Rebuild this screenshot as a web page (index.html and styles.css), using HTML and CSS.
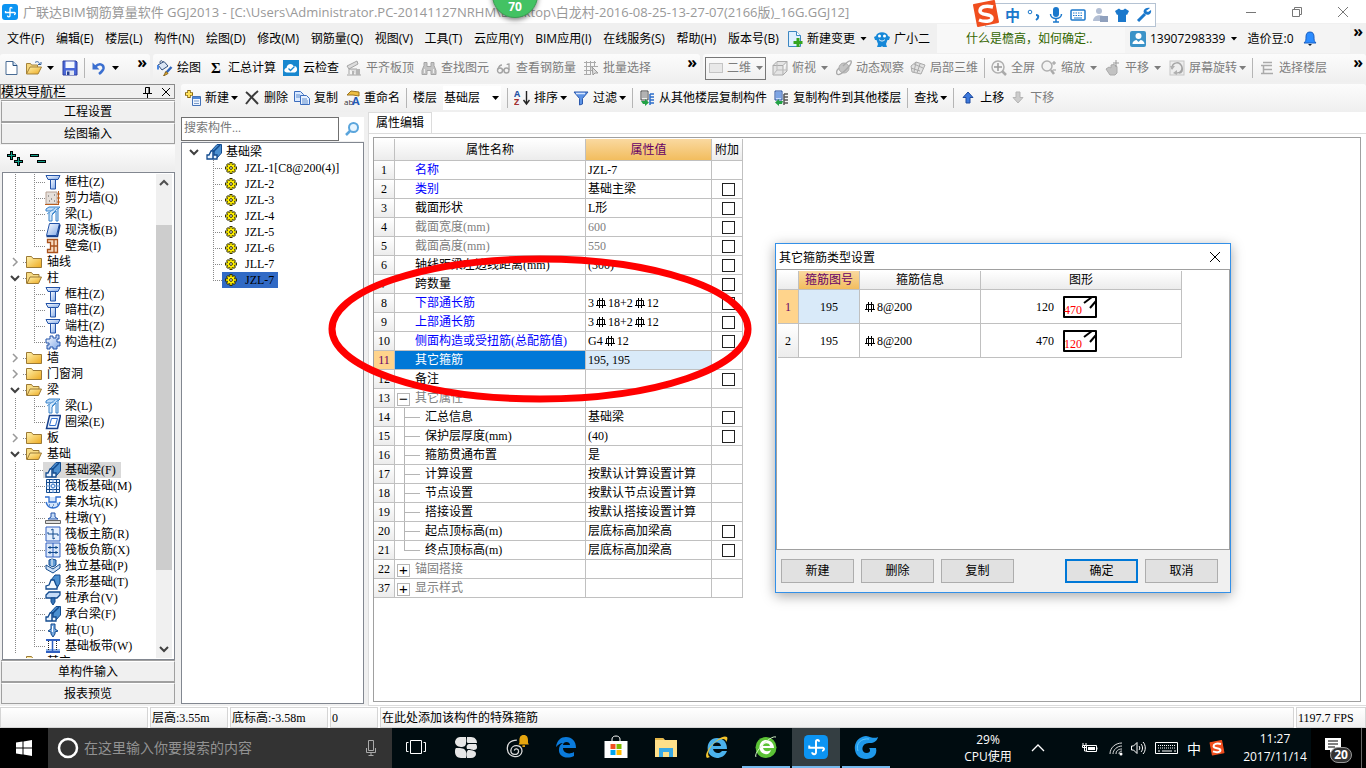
FILE: index.html
```html
<!DOCTYPE html>
<html lang="zh-CN">
<head>
<meta charset="utf-8">
<title>广联达BIM钢筋算量软件 GGJ2013</title>
<link rel="stylesheet" href="styles.css">
</head>
<body>
<svg class="defs" aria-hidden="true">
<defs>
<linearGradient id="gb" x1="0" y1="0" x2="1" y2="1"><stop offset="0" stop-color="#fff"/><stop offset="1" stop-color="#7fa8e8"/></linearGradient>
<linearGradient id="gy" x1="0" y1="0" x2="1" y2="1"><stop offset="0" stop-color="#fff3b0"/><stop offset="1" stop-color="#eda91f"/></linearGradient>
</defs>
<symbol id="app" viewBox="0 0 16 16"><rect width="16" height="16" rx="3" fill="#0c94f2"/><path d="M10 4.500C10 3 8 3 8 4.500v7c0 2-2.500 1.500-2.500 0M3.500 7v1.500h9c1.200 0 1.200 2-.5 2" fill="none" stroke="#fff" stroke-width="1.300"/></symbol>
<symbol id="new" viewBox="0 0 16 16"><path d="M2 1.500h7l4 4v9H2z" fill="#fff" stroke="#4a6c95"/><path d="M9 1.500v4h4" fill="#cfe0f5" stroke="#27507f"/></symbol>
<symbol id="open" viewBox="0 0 16 16"><path d="M.5 14V3.500h4l1 1.500h6v2" fill="#f5d67c" stroke="#a5833a"/><path d="M.5 14 4 7h11.500L12 14z" fill="url(#gy)" stroke="#a5833a"/><path d="M9 2.500c2-1.500 4-1 4.500 1.500m1.500-2v2.500h-3" fill="none" stroke="#2f5f9e"/></symbol>
<symbol id="save" viewBox="0 0 16 16"><path d="M1 1h13l1 1v13H1z" fill="#4a68d8" stroke="#2e3f9f"/><path d="M3.500 1.500h9V8h-9z" fill="#f4f7ff"/><path d="M4 10.500h8V15H4z" fill="#dfe5f2"/><path d="M5 11.500h2.500V15H5z" fill="#26408f"/></symbol>
<symbol id="undo" viewBox="0 0 16 16"><path d="M4 7c5-5 9-2 8.500 1.500C12 11 10 12.500 8 14" fill="none" stroke="#3b6fd0" stroke-width="2.500"/><path d="M1.500 2.500v7h7z" fill="#3b6fd0"/></symbol>
<symbol id="paint" viewBox="0 0 16 16"><path d="m1 5 6-3.500 4 4.500-6 4z" fill="#dbe6f5" stroke="#304e7c"/><path d="M3 3C3 0 5 0 6 2.500" fill="none" stroke="#304e7c"/><path d="M1 5v4.500" stroke="#4a86df" stroke-width="2"/><path d="m14.500 7-6 6.500" stroke="#2f66bd" stroke-width="2.500"/><path d="m9 11.500 2 2L6.500 16z" fill="#e5ad2d" stroke="#8b6921"/></symbol>
<symbol id="cloud" viewBox="0 0 16 16"><rect width="16" height="16" fill="#1787cf"/><path d="M4 12.500c-3.500 0-3.500-4-.5-4.500C4 3.500 9 2.500 10.500 6c4-.5 5 5 1.500 6.500z" fill="#fff"/><path d="m5.500 8.500 2 2 4-4" fill="none" stroke="#1787cf" stroke-width="1.300"/></symbol>
<symbol id="align" viewBox="0 0 16 16"><path d="m1 6 10-5 1 3L3 9zM3 9v5m0-5h8v6M1 15h14" fill="#ddd" stroke="#a5a5a5"/><path d="M6 11h2v4H6zm4-2h4v6h-4z" fill="#b5b5b5"/></symbol>
<symbol id="bino" viewBox="0 0 16 16"><path d="M3 2.500h3v4h4v-4h3v3l2 5v4h-5v-4H6v4H1v-4l2-5z" fill="#c4c4c4" stroke="#a5a5a5"/><path d="M3.500 9v4m9-4v4" stroke="#eee"/></symbol>
<symbol id="glasses" viewBox="0 0 16 16"><circle cx="4" cy="10.500" r="2.500" fill="none" stroke="#a4a4a4" stroke-width="1.400"/><circle cx="10.500" cy="10.500" r="2.500" fill="none" stroke="#a4a4a4" stroke-width="1.400"/><path d="M6.500 10h2M2 9c1-3 2-4 4-4m7 5V4c-1 0-2 0-2 1" fill="none" stroke="#a4a4a4" stroke-width="1.300"/></symbol>
<symbol id="batch" viewBox="0 0 16 16"><path d="M1 2.500h12M1 6.500h14M1 10.500h8M1 14.500h6M3.500 1v14M7.500 1v14M11.500 1v6" stroke="#aaa" fill="none"/><path d="m9 7 6 6-3 0-2 2z" fill="#ddd" stroke="#999"/></symbol>
<symbol id="cube" viewBox="0 0 16 16"><path d="M1 5.500h10V15H1zM1 5.500l4-4h10l-4 4M15 1.500v9.500l-4 4" fill="#e4e4e4" stroke="#aaa"/><path d="M5 2v8h10M5 10l-4 5" stroke="#bbb" fill="none"/></symbol>
<symbol id="orbit" viewBox="0 0 16 16"><circle cx="8" cy="8" r="5" fill="#c4c4c4" stroke="#adadad"/><path d="M1 14c3 3 16-10 14-13C13 0 9 4 7 6M1 14c-1-2 0-4 2-6" fill="none" stroke="#aaa" stroke-width="1.400"/></symbol>
<symbol id="local" viewBox="0 0 16 16"><path d="m1 6 5-4 9 3-4 9-9-2zM4 4l9 4M1 8l9 3M6 2 4 12M10 4 7 13" fill="#e2e2e2" stroke="#aaa"/></symbol>
<symbol id="full" viewBox="0 0 16 16"><circle cx="7" cy="7" r="6" fill="#f5f5f5" stroke="#b0b0b0" stroke-width="1.500"/><path d="M7 3v8M3 7h8" stroke="#999" stroke-width="1.500"/><path d="m11 11 4 4" stroke="#aaa" stroke-width="2.500"/></symbol>
<symbol id="zoom" viewBox="0 0 16 16"><circle cx="6" cy="6" r="5" fill="#f3f3f3" stroke="#b0b0b0" stroke-width="1.500"/><path d="m10 10 3 4" stroke="#aaa" stroke-width="2.500"/><path d="M11 3h4m-2-2v4m-1 5h3" stroke="#999"/></symbol>
<symbol id="pan" viewBox="0 0 16 16"><path d="m1 9 3-2 2 1V5l3-.5 3 2V13l-2 2H5z" fill="#c2c2c2" stroke="#aaa"/><path d="M11 0v7M8 3h6" stroke="#999"/></symbol>
<symbol id="rotate" viewBox="0 0 16 16"><rect x="1" y="1" width="14" height="14" fill="#ededed" stroke="#c5c5c5"/><path d="M3 9c-1-8 10-8 10-1 0 5-4 5-7 5M10 13c3 0 4-3 3-6" stroke="#a5a5a5" stroke-width="1.500" fill="none"/><path d="M1 6h5l-3 4zM8 10v5l-4-2z" fill="#b0b0b0"/></symbol>
<symbol id="floors" viewBox="0 0 16 16"><path d="M4 2.500h9M2 5.500h11M4 9.500h9M2 13.500h12M4.500 5v8" stroke="#aaa" stroke-width="1.500" fill="none"/></symbol>
<symbol id="add" viewBox="0 0 16 16"><path d="M4 0v8M0 4h8" stroke="#8c6b10" stroke-width="3.500"/><path d="M4 1v6M1 4h6" stroke="#ffe15b" stroke-width="2"/><path d="M7.500 6.500h8v9h-8z" fill="#eef5ff" stroke="#4472b8"/><path d="M8 8h7" stroke="#4d86d8" stroke-width="2"/><path d="M9 11h5m-5 2.500h5" stroke="#7d9dca"/></symbol>
<symbol id="x" viewBox="0 0 16 16"><path d="M2 2c4 3 8 8 12 12M14 1C9 5 5 10 2 14" stroke="#3b3b3b" stroke-width="2" fill="none"/></symbol>
<symbol id="copy" viewBox="0 0 16 16"><path d="M.5 1.500h6l3 3v7h-9z" fill="#dae9ff" stroke="#3c6dbd"/><path d="M6.500 5.500h6l3 3v6h-9z" fill="#e9f2ff" stroke="#3c6dbd"/><path d="M2 5h4M2 7h4M8 9h5m-5 2h6m-6 2h6" stroke="#5f8ccc"/></symbol>
<symbol id="funnel" viewBox="0 0 16 16"><path d="M1 2h14L9.500 8.500V14l-3 1V8.500z" fill="#5c93e6" stroke="#2c59ac"/><path d="M3 3.500h9" stroke="#d7e6ff" stroke-width="1.500"/></symbol>
<symbol id="cpf" viewBox="0 0 16 16"><path d="M2 1h7v9H2z" fill="#eee" stroke="#444"/><path d="M3 3h5M3 5h5M3 7h5" stroke="#777"/><path d="M11 4h4M11 7h4M11 10h4M11 13h4M11 4v11" stroke="#2d6dca" stroke-width="1.500"/><path d="M2 11h4V9l4 3.500L6 16v-2H4z" fill="#23a145"/></symbol>
<symbol id="cpt" viewBox="0 0 16 16"><path d="M2 1h7v9H2z" fill="#cbdcff" stroke="#254f9c"/><path d="M3 3h5M3 5h5M3 7h5" stroke="#2d6dca"/><path d="M11 4h4M11 7h4M11 10h4M11 13h4M11 4v11" stroke="#555" stroke-width="1.500"/><path d="M10 11H6V9l-4 3.500L6 16v-2h3z" fill="#23a145"/></symbol>
<symbol id="up" viewBox="0 0 16 16"><path d="m8 2 5 5.500h-3V13H6V7.500H3z" fill="#3d79dd" stroke="#1e4a9d"/></symbol>
<symbol id="down" viewBox="0 0 16 16"><path d="M8 13 3 7.500h3V2h4v5.500h3z" fill="#ccc" stroke="#b5b5b5"/></symbol>
<symbol id="chg" viewBox="0 0 16 16"><path d="M1.500.5h8l4 4v11h-12z" fill="#dff0ff" stroke="#3c87c2"/><path d="M9.500.5v4h4" fill="#fff" stroke="#3c87c2"/><path d="M11 7v9m-4.500-4.500h9" stroke="#35a51e" stroke-width="3"/></symbol>
<symbol id="bot" viewBox="0 0 16 16"><path d="M2 5C3 0 13 0 14 5l2 1-1 3-1.500 0L12 13l1 3H9l-1-1-1 1H3l1-3-1.500-4L1 9 0 6z" fill="#1688d8"/><circle cx="5.500" cy="5" r="1.500" fill="#fff"/><circle cx="10.500" cy="5" r="1.500" fill="#fff"/><path d="M5 8.500c2 2 4 2 6 0" stroke="#fff" fill="none"/></symbol>
<symbol id="usr" viewBox="0 0 16 16"><rect width="16" height="16" rx="2" fill="#3b93c8"/><circle cx="8.500" cy="5" r="3" fill="#fff"/><path d="M2.500 13c0-3 3-4 4-4l2 2 2-2c2 0 4 2 4 4z" fill="#fff"/></symbol>
<symbol id="bell" viewBox="0 0 16 16"><path d="M8 1c3 0 4 2 4 5s0 4 2 6H2c2-2 2-3 2-6s1-5 4-5z" fill="#2b8cff" stroke="#1b5fc0"/><path d="m6 13 2 2 2-2z" fill="#123"/></symbol>
<symbol id="col" viewBox="0 0 16 16"><path d="M1 1.500h14l-2 4H3z" fill="url(#gb)" stroke="#2353a8"/><path d="M5.500 5.500h5v9.500h-5z" fill="url(#gb)" stroke="#2353a8"/></symbol>
<symbol id="wall" viewBox="0 0 16 16"><path d="M1 2h11v12H1z" fill="#e5dfda" stroke="#b7a294"/><path d="M13.500 1v14M0 14.500h14M12 4h3m-3 4h3m-3 4h3" stroke="#b95d1d" fill="none"/><path d="M3 6h1m2 3h1m2-4h1M4 11h1m4 0h1" stroke="#555"/></symbol>
<symbol id="beam" viewBox="0 0 16 16"><path d="M1 3 4 1h11l-4 4-10 0z" fill="#b9d9f8" stroke="#3a83c9"/><path d="M4 6v9h3V9l4-4v10h2V3" fill="#d3e8fc" stroke="#3a83c9"/><path d="m2 8 8-6m-3 6 6-6" stroke="#5a9cd8"/></symbol>
<symbol id="slab" viewBox="0 0 16 16"><path d="M4.500 1.500h10l-3 12H1.500z" fill="url(#gb)" stroke="#2353a8"/><path d="M1.500 14.500h11l2.500-12" fill="none" stroke="#17408c" stroke-width="1.500"/></symbol>
<symbol id="niche" viewBox="0 0 16 16"><path d="M2.500 1.500h10v13h-10v-3h3v-7h-3zM9 2v12M6 8h6" fill="#f9dcc1" stroke="#a9521c" stroke-width="1.300"/></symbol>
<symbol id="folder" viewBox="0 0 16 16"><path d="M.5 13.500v-11h5l1.500 2h8.500v9z" fill="url(#gy)" stroke="#9c7a35"/></symbol>
<symbol id="fopen" viewBox="0 0 16 16"><path d="M.5 13.500v-11h5l1.500 2h6v3" fill="#f8dc85" stroke="#9c7a35"/><path d="m1 13.500 3-6.500h11.500l-3 6.500z" fill="url(#gy)" stroke="#9c7a35"/></symbol>
<symbol id="gcol" viewBox="0 0 16 16"><path d="M5 2h3v2h3V1h3v4h-2v3h3v4h-3v3H8v-2H5v2H2v-4h2V9H1V5h4z" fill="url(#gb)" stroke="#2353a8"/></symbol>
<symbol id="ring" viewBox="0 0 16 16"><path d="M4.500 1.500h11l-3 13h-11z" fill="#eef5ff" stroke="#17408c" stroke-width="1.500"/><path d="M6.500 4.500h6l-2 7h-6z" fill="#fff" stroke="#2f6fd0"/></symbol>
<symbol id="fbeam" viewBox="0 0 16 16"><path d="m5 7 6-6.500h4.500V9L11 14" fill="#4b8fd0" stroke="#134b8e"/><path d="M1 15v-4h2l2-4h3v4h3v4z" fill="#eaf4ff" stroke="#134b8e" stroke-width="1.300"/><path d="M7 15V8l7-7" stroke="#134b8e" stroke-width="1.500" fill="none"/></symbol>
<symbol id="raft" viewBox="0 0 16 16"><path d="M1.500 1.500h13v13h-13z" fill="#eaf2fe" stroke="#134b8e"/><path d="M4.500 1v14M11.500 1v14M1 4.500h14M1 11.500h14" fill="none" stroke="#134b8e"/><path d="M6.500 6.500h3v3h-3zM8 1v5m0 4v5M1 8h5m4 0h5" fill="none" stroke="#5b8fd0"/></symbol>
<symbol id="pit" viewBox="0 0 16 16"><path d="M0 3h4v5h7V3h5M1 8c2 8 12 8 14 0" fill="#d4e5fb" stroke="#2f6fd0" stroke-width="1.300"/><path d="M4 11h1m3 0h1m3-1h1m-6 3h1" stroke="#134b8e"/></symbol>
<symbol id="pier" viewBox="0 0 16 16"><path d="m3 9 3-2V3h4v4l3 2z" fill="#c5dcf8" stroke="#2353a8"/><path d="M.5 10.500h15v3H.5z" fill="#ddd" stroke="#666"/></symbol>
<symbol id="rmain" viewBox="0 0 16 16"><path d="M1 1h14v14H1z" fill="#e6f0fe" stroke="#2f5fc0"/><path d="M8 3v10M3 8h10M6 4l2-1M3 8V6m10 2v2m-5 3 2-1" stroke="#134b8e" fill="none"/></symbol>
<symbol id="rneg" viewBox="0 0 16 16"><path d="M1 1h14v14H1zM8 1v14" fill="#dbe7f8" stroke="#2f5fc0"/><path d="M3 5.500h10M3 10.500h10M5 4v3m6-3v3M5 9v3m6-3v3" stroke="#134b8e" fill="none"/></symbol>
<symbol id="iso" viewBox="0 0 16 16"><path d="m1 7 7 4 7-5v4l-7 5-7-4z" fill="#cfe2f8" stroke="#134b8e"/><path d="M4 7V2l3-1 4 1v5L8 9z" fill="#629bd4" stroke="#134b8e"/><path d="M7 1v7" stroke="#fff"/></symbol>
<symbol id="strip" viewBox="0 0 16 16"><path d="m6 6 4-5h5v8l-3 5" fill="#4b8fd0" stroke="#134b8e"/><path d="M1 15v-3l3-1 2-5h3l2 5 1 1v3z" fill="#f3f9ff" stroke="#134b8e" stroke-width="1.300"/></symbol>
<symbol id="cap" viewBox="0 0 16 16"><path d="m1 5 3-3h11v3l-3 3H1z" fill="#c5dcf8" stroke="#134b8e" stroke-width="1.300"/><path d="M6 8h4v4l-2 3-2-3z" fill="#3573b5" stroke="#134b8e"/></symbol>
<symbol id="pile" viewBox="0 0 16 16"><path d="M6 2h4v5l3 2-3 1v2l-2 3-2-3v-2L3 9l3-2z" fill="#75a7dd" stroke="#134b8e"/><path d="M7.500 4v6" stroke="#fff"/></symbol>
<symbol id="band" viewBox="0 0 16 16"><path d="M1 2h14M1 14h14" stroke="#2f5fc0" stroke-width="2"/><path d="M1 11h14v2H1z" fill="#8db3ec"/><path d="M7.500 3v10" stroke="#2f5fc0" stroke-width="1.500"/><path d="M3.500 3v10m8-10v10" stroke="#222" stroke-dasharray="1 1"/></symbol>
<symbol id="gear" viewBox="0 0 16 16"><path d="M8 2v12M2 8h12M4 4l8 8M12 4l-8 8" stroke="#333000" stroke-width="3"/><path d="M8 3v10M3 8h10M4.500 4.500l7 7M11.500 4.500l-7 7" stroke="#ffee00" stroke-width="1.400"/><circle cx="8" cy="8" r="3.400" fill="#ffee00"/><circle cx="8" cy="8" r="1.400" fill="#fff" stroke="#333000"/></symbol>
<symbol id="rebar" viewBox="0 0 12 12"><path d="M4.500 1v10M7.500 1v10M1 8.500h10M2.500 8.500v-5h7v5" fill="none" stroke="currentColor"/></symbol>
<symbol id="sogou" viewBox="0 0 28 28"><path d="m2 5 20-4 4 21-20 4z" fill="#f04e1e" stroke="#f04e1e" stroke-width="2" stroke-linejoin="round"/><path d="M21 7C13 5 8 7 8 11c0 5 12 2 12 7 0 4-8 4-13 2" fill="none" stroke="#fff" stroke-width="3.500"/></symbol>
<symbol id="chevD" viewBox="0 0 12 12"><path d="m2 4 4 4 4-4" fill="none" stroke="#404040" stroke-width="2"/></symbol>
<symbol id="chevR" viewBox="0 0 12 12"><path d="m4 2 4 4-4 4" fill="none" stroke="#999" stroke-width="1.500"/></symbol>
<symbol id="chevU" viewBox="0 0 12 12"><path d="m2 8 4-4 4 4" fill="none" stroke="#505050" stroke-width="2"/></symbol>
<symbol id="hoop" viewBox="0 0 36 24"><path d="M2 2h32v20H2z" fill="none" stroke="#000" stroke-width="2" stroke-linejoin="round"/><path d="m22 8 8-6M28 13l6-7" stroke="#000" stroke-width="2"/></symbol>
</svg>

<header class="title">
<svg class="i"><use href="#app"/></svg>
<span class="title-text">广联达BIM钢筋算量软件 GGJ2013 - [C:\Users\Administrator.PC-20141127NRHM\Desktop\白龙村-2016-08-25-13-27-07(2166版)_16G.GGJ12]</span>
<div class="winbtns">
<button aria-label="最小化"><svg class="i" viewBox="0 0 16 16"><path d="M3 8.500h10" stroke="#777"/></svg></button>
<button aria-label="还原"><svg class="i" viewBox="0 0 16 16"><path d="M3.500 5.500h7v7h-7zM5.500 5.500v-2h7v7h-2" fill="none" stroke="#777"/></svg></button>
<button aria-label="关闭"><svg class="i" viewBox="0 0 16 16"><path d="m3 3 10 10M13 3 3 13" stroke="#777"/></svg></button>
</div>
</header>

<nav class="menu">
<div class="menus">
<button>文件(F)</button><button>编辑(E)</button><button>楼层(L)</button><button>构件(N)</button><button>绘图(D)</button><button>修改(M)</button><button>钢筋量(Q)</button><button>视图(V)</button><button>工具(T)</button><button>云应用(Y)</button><button>BIM应用(I)</button><button>在线服务(S)</button><button>帮助(H)</button><button>版本号(B)</button>
</div>
<div class="menu-extra"><button class="t"><svg class="i"><use href="#chg"/></svg>新建变更<i class="caret"></i></button><button class="t"><svg class="i"><use href="#bot"/></svg>广小二</button></div>
<a class="tip" href="#">什么是檐高，如何确定..</a>
<div class="account"><button class="t"><svg class="i"><use href="#usr"/></svg>13907298339<i class="caret"></i></button><span>造价豆:0</span><svg class="i"><use href="#bell"/></svg></div>
<span class="more">»</span>
</nav>

<div class="bars">
<div class="bar b1">
<button class="t" aria-label="新建"><svg class="i"><use href="#new"/></svg></button>
<button class="t" aria-label="打开"><svg class="i"><use href="#open"/></svg><i class="caret"></i></button>
<button class="t" aria-label="保存"><svg class="i"><use href="#save"/></svg></button><i class="sep"></i>
<button class="t" aria-label="撤销"><svg class="i"><use href="#undo"/></svg><i class="caret"></i></button>
<span class="more">»</span>
</div>
<div class="bar b2">
<button class="t"><svg class="i"><use href="#paint"/></svg>绘图</button>
<button class="t"><b class="sigma">Σ</b>汇总计算</button>
<button class="t"><svg class="i"><use href="#cloud"/></svg>云检查</button>
<button class="t off"><svg class="i"><use href="#align"/></svg>平齐板顶</button>
<button class="t off"><svg class="i"><use href="#bino"/></svg>查找图元</button>
<button class="t off"><svg class="i"><use href="#glasses"/></svg>查看钢筋量</button>
<button class="t off"><svg class="i"><use href="#batch"/></svg>批量选择</button>
<span class="more">»</span>
</div>
<div class="bar b3">
<button class="t off view"><i class="swatch"></i>二维<i class="caret"></i></button>
<button class="t off"><svg class="i"><use href="#cube"/></svg>俯视<i class="caret"></i></button>
<button class="t off"><svg class="i"><use href="#orbit"/></svg>动态观察</button>
<button class="t off"><svg class="i"><use href="#local"/></svg>局部三维</button><i class="sep"></i>
<button class="t off"><svg class="i"><use href="#full"/></svg>全屏</button>
<button class="t off"><svg class="i"><use href="#zoom"/></svg>缩放<i class="caret"></i></button>
<button class="t off"><svg class="i"><use href="#pan"/></svg>平移<i class="caret"></i></button>
<button class="t off tight"><svg class="i"><use href="#rotate"/></svg>屏幕旋转<i class="caret"></i></button><i class="sep"></i>
<button class="t off"><svg class="i"><use href="#floors"/></svg>选择楼层</button>
<span class="more">»</span>
</div>
</div>

<div class="work">
<aside class="nav">
<div class="nav-head"><span>模块导航栏</span><svg class="i" viewBox="0 0 16 16"><path d="M5.500 3.500h4v6h-4zM9 3v7M3 9.500h9M7.500 10v4" stroke="#000" fill="none"/></svg><svg class="i" viewBox="0 0 16 16"><path d="m4 4 8 8M12 4l-8 8" stroke="#000"/></svg></div>
<button class="nav-btn">工程设置</button>
<button class="nav-btn">绘图输入</button>
<div class="nav-tools"><svg class="i" viewBox="0 0 16 16"><path d="M4.500 0v9M0 4.500h9M11.500 6v9M7 10.500h9" stroke="#000" stroke-width="3"/><path d="M4.500 1v7M1 4.500h7M11.500 7v7M8 10.500h7" stroke="#12a08a"/></svg><svg class="i" viewBox="0 0 16 16"><path d="M0 4.500h9M7 10.500h9" stroke="#000" stroke-width="3"/><path d="M1 4.500h7M8 10.500h7" stroke="#12a08a"/></svg></div>
<div class="tree-box">
<ul class="tree">
<li><svg class="i"><use href="#col"/></svg>框柱(Z)</li>
<li><svg class="i"><use href="#wall"/></svg>剪力墙(Q)</li>
<li><svg class="i"><use href="#beam"/></svg>梁(L)</li>
<li><svg class="i"><use href="#slab"/></svg>现浇板(B)</li>
<li class="last"><svg class="i"><use href="#niche"/></svg>壁龛(I)</li>
<li class="dir"><svg class="c"><use href="#chevR"/></svg><svg class="i"><use href="#folder"/></svg>轴线</li>
<li class="dir"><svg class="c"><use href="#chevD"/></svg><svg class="i"><use href="#fopen"/></svg>柱</li>
<li><svg class="i"><use href="#col"/></svg>框柱(Z)</li>
<li><svg class="i"><use href="#col"/></svg>暗柱(Z)</li>
<li><svg class="i"><use href="#col"/></svg>端柱(Z)</li>
<li class="last"><svg class="i"><use href="#gcol"/></svg>构造柱(Z)</li>
<li class="dir"><svg class="c"><use href="#chevR"/></svg><svg class="i"><use href="#folder"/></svg>墙</li>
<li class="dir"><svg class="c"><use href="#chevR"/></svg><svg class="i"><use href="#folder"/></svg>门窗洞</li>
<li class="dir"><svg class="c"><use href="#chevD"/></svg><svg class="i"><use href="#fopen"/></svg>梁</li>
<li><svg class="i"><use href="#beam"/></svg>梁(L)</li>
<li class="last"><svg class="i"><use href="#ring"/></svg>圈梁(E)</li>
<li class="dir"><svg class="c"><use href="#chevR"/></svg><svg class="i"><use href="#folder"/></svg>板</li>
<li class="dir"><svg class="c"><use href="#chevD"/></svg><svg class="i"><use href="#fopen"/></svg>基础</li>
<li><span class="cur"><svg class="i"><use href="#fbeam"/></svg>基础梁(F)</span></li>
<li><svg class="i"><use href="#raft"/></svg>筏板基础(M)</li>
<li><svg class="i"><use href="#pit"/></svg>集水坑(K)</li>
<li><svg class="i"><use href="#pier"/></svg>柱墩(Y)</li>
<li><svg class="i"><use href="#rmain"/></svg>筏板主筋(R)</li>
<li><svg class="i"><use href="#rneg"/></svg>筏板负筋(X)</li>
<li><svg class="i"><use href="#iso"/></svg>独立基础(P)</li>
<li><svg class="i"><use href="#strip"/></svg>条形基础(T)</li>
<li><svg class="i"><use href="#cap"/></svg>桩承台(V)</li>
<li><svg class="i"><use href="#fbeam"/></svg>承台梁(F)</li>
<li><svg class="i"><use href="#pile"/></svg>桩(U)</li>
<li class="last"><svg class="i"><use href="#band"/></svg>基础板带(W)</li>
<li class="dir"><svg class="c"></svg><svg class="i"><use href="#folder"/></svg>其它</li>
</ul>
<div class="scroll"><svg class="c"><use href="#chevU"/></svg><div class="track"><i></i></div><svg class="c"><use href="#chevD"/></svg></div>
</div>
<button class="nav-btn">单构件输入</button>
<button class="nav-btn">报表预览</button>
</aside>

<main class="main">
<div class="bar b4">
<button class="t tight"><svg class="i"><use href="#add"/></svg>新建<i class="caret"></i></button>
<button class="t"><svg class="i"><use href="#x"/></svg>删除</button>
<button class="t"><svg class="i"><use href="#copy"/></svg>复制</button>
<button class="t"><svg class="i" viewBox="0 0 16 16"><path d="m3 5 4-4 8 1v4L9 5z" fill="#edbd42" stroke="#9b7421"/><text x="0" y="15" font-size="8" fill="#333">ab</text><text x="8" y="15" font-size="11" font-weight="bold" fill="#2459b3">A</text></svg>重命名</button><i class="sep"></i>
<label for="floor">楼层</label><span class="floor"><select id="floor"><option>基础层</option></select><i class="caret"></i></span><i class="sep"></i>
<button class="t tight"><svg class="i" viewBox="0 0 16 16"><text x="0" y="7" font-size="9" font-weight="bold" fill="#2353a5">A</text><text x="0" y="15" font-size="9" font-weight="bold" fill="#a33131">Z</text><path d="M12.500 1v12m-3-3 3 4 3-4" fill="none" stroke="#222" stroke-width="1.400"/></svg>排序<i class="caret"></i></button>
<button class="t tight"><svg class="i"><use href="#funnel"/></svg>过滤<i class="caret"></i></button><i class="sep"></i>
<button class="t"><svg class="i"><use href="#cpf"/></svg>从其他楼层复制构件</button>
<button class="t"><svg class="i"><use href="#cpt"/></svg>复制构件到其他楼层</button><i class="sep"></i>
<button class="t tight">查找<i class="caret"></i></button><i class="sep"></i>
<button class="t"><svg class="i"><use href="#up"/></svg>上移</button>
<button class="t off"><svg class="i"><use href="#down"/></svg>下移</button>
</div>
<div class="split">
<section class="list">
<div class="search"><input type="text" placeholder="搜索构件..." aria-label="搜索构件"><button aria-label="搜索"><svg class="i" viewBox="0 0 16 16"><circle cx="9.500" cy="6.500" r="4.500" fill="#e6f4ff" stroke="#5aa5dc" stroke-width="2"/><path d="m6 10-4 4" stroke="#5aa5dc" stroke-width="2.500"/></svg></button></div>
<ul class="parts">
<li class="root"><svg class="c"><use href="#chevD"/></svg><svg class="i"><use href="#fbeam"/></svg>基础梁</li>
<li><span><svg class="i"><use href="#gear"/></svg>JZL-1[C8@200(4)]</span></li>
<li><span><svg class="i"><use href="#gear"/></svg>JZL-2</span></li>
<li><span><svg class="i"><use href="#gear"/></svg>JZL-3</span></li>
<li><span><svg class="i"><use href="#gear"/></svg>JZL-4</span></li>
<li><span><svg class="i"><use href="#gear"/></svg>JZL-5</span></li>
<li><span><svg class="i"><use href="#gear"/></svg>JZL-6</span></li>
<li><span><svg class="i"><use href="#gear"/></svg>JLL-7</span></li>
<li class="last"><span class="sel"><svg class="i"><use href="#gear"/></svg>JZL-7</span></li>
</ul>
</section>
<section class="props">
<div class="tabs"><button class="tab">属性编辑</button></div>
<div class="pane"><div class="sheet">
<table class="grid">
<colgroup><col class="c-no"><col class="c-name"><col class="c-val"><col class="c-add"></colgroup>
<thead><tr><th></th><th>属性名称</th><th class="hot">属性值</th><th>附加</th></tr></thead>
<tbody>
<tr><th>1</th><td class="n blue">名称</td><td>JZL-7</td><td></td></tr>
<tr><th>2</th><td class="n blue">类别</td><td>基础主梁</td><td><input type="checkbox" aria-label="附加 类别"></td></tr>
<tr><th>3</th><td class="n">截面形状</td><td>L形</td><td><input type="checkbox" aria-label="附加 截面形状"></td></tr>
<tr class="dim"><th>4</th><td class="n">截面宽度(mm)</td><td>600</td><td><input type="checkbox" aria-label="附加 截面宽度"></td></tr>
<tr class="dim"><th>5</th><td class="n">截面高度(mm)</td><td>550</td><td><input type="checkbox" aria-label="附加 截面高度"></td></tr>
<tr><th>6</th><td class="n">轴线距梁左边线距离(mm)</td><td>(300)</td><td><input type="checkbox" aria-label="附加 轴线距离"></td></tr>
<tr><th>7</th><td class="n">跨数量</td><td></td><td><input type="checkbox" aria-label="附加 跨数量"></td></tr>
<tr><th>8</th><td class="n blue">下部通长筋</td><td>3<svg class="r"><use href="#rebar"/></svg>18+2<svg class="r"><use href="#rebar"/></svg>12</td><td><input type="checkbox" aria-label="附加 下部通长筋"></td></tr>
<tr><th>9</th><td class="n blue">上部通长筋</td><td>3<svg class="r"><use href="#rebar"/></svg>18+2<svg class="r"><use href="#rebar"/></svg>12</td><td><input type="checkbox" aria-label="附加 上部通长筋"></td></tr>
<tr><th>10</th><td class="n blue">侧面构造或受扭筋(总配筋值)</td><td>G4<svg class="r"><use href="#rebar"/></svg>12</td><td><input type="checkbox" aria-label="附加 侧面构造"></td></tr>
<tr class="active"><th>11</th><td class="n">其它箍筋</td><td>195, 195</td><td></td></tr>
<tr><th>12</th><td class="n">备注</td><td></td><td><input type="checkbox" aria-label="附加 备注"></td></tr>
<tr class="dim"><th>13</th><td class="g"><button class="pm" aria-label="折叠">−</button>其它属性</td><td></td><td></td></tr>
<tr><th>14</th><td class="s">汇总信息</td><td>基础梁</td><td><input type="checkbox" aria-label="附加 汇总信息"></td></tr>
<tr><th>15</th><td class="s">保护层厚度(mm)</td><td>(40)</td><td><input type="checkbox" aria-label="附加 保护层厚度"></td></tr>
<tr><th>16</th><td class="s">箍筋贯通布置</td><td>是</td><td></td></tr>
<tr><th>17</th><td class="s">计算设置</td><td>按默认计算设置计算</td><td></td></tr>
<tr><th>18</th><td class="s">节点设置</td><td>按默认节点设置计算</td><td></td></tr>
<tr><th>19</th><td class="s">搭接设置</td><td>按默认搭接设置计算</td><td></td></tr>
<tr><th>20</th><td class="s">起点顶标高(m)</td><td>层底标高加梁高</td><td><input type="checkbox" aria-label="附加 起点顶标高"></td></tr>
<tr><th>21</th><td class="s end">终点顶标高(m)</td><td>层底标高加梁高</td><td><input type="checkbox" aria-label="附加 终点顶标高"></td></tr>
<tr class="dim"><th>22</th><td class="g"><button class="pm" aria-label="展开">+</button>锚固搭接</td><td></td><td></td></tr>
<tr class="dim"><th>37</th><td class="g"><button class="pm" aria-label="展开">+</button>显示样式</td><td></td><td></td></tr>
</tbody>
</table>
</div></div>
</section>
</div>
</main>
</div>

<footer class="status"><span class="s1"></span><span class="s2">层高:3.55m</span><span class="s3">底标高:-3.58m</span><span class="s4">0</span><span class="s5">在此处添加该构件的特殊箍筋</span><span class="s6">1197.7 FPS</span></footer>

<div class="task">
<button class="start" aria-label="开始"><svg class="i" viewBox="0 0 16 16"><path d="m0 2.500 6.500-1v6H0zM7.500 1.400 16 0v7.500H7.500zM0 8.500h6.500v6L0 13.500zM7.500 8.500H16V16l-8.500-1.400z" fill="#fff"/></svg></button>
<label class="cortana"><svg viewBox="0 0 24 24"><circle cx="12" cy="12" r="9" fill="none" stroke="#fff" stroke-width="2.500"/></svg><input type="text" placeholder="在这里输入你要搜索的内容"><svg class="i" viewBox="0 0 16 16"><path d="M5.500.5h5v10h-5zM3.500 8v4.500h9V8M8 12.500v3m-2.500 0h5" fill="none" stroke="#aaa"/></svg></label>
<div class="apps">
<button aria-label="任务视图"><svg viewBox="0 0 24 24"><path d="M6.500 5.500h11v13h-11zM4.500 7.500h-2v9h2m15-9h2v9h-2" fill="none" stroke="#fff"/></svg></button>
<button aria-label="花瓣"><svg viewBox="0 0 24 24"><g fill="#e6e6e6"><path d="M12 2v6c0 3-2 4-5 4C3 12 1 9 1 7s2-5 5-5z"/><path d="M13 2h4c4 0 6 3 6 6h-9c-2 0-1-4-1-6z"/><path d="M22 9c2 3 1 6-2 6-2 0-3-1-7-1-1-3 0-5 3-5z"/><path d="M14 15c5 0 8 1 8 4 0 2-2 4-5 4h-4c-1-3-1-6 1-8z"/><path d="M2 13c3 0 8 0 9 2 2 2 1 6 1 8H7c-4 0-6-3-6-6 0-2 0-3 1-4z"/></g></svg></button>
<button aria-label="提醒"><svg viewBox="0 0 28 28"><path d="M15 6C7 6 3 11 4 17c1 10 16 11 17 2 0-8-12-9-13-1 0 6 9 6 9 1 0-3-4-4-5-1" fill="none" stroke="#ddd" stroke-width="1.500"/><path d="M23 0c4 0 5 3 5 6v3l1 2H17l1-2V6c0-3 1-6 5-6zM21.500 12h3v2h-3z" fill="#e5a50f"/></svg></button>
<button aria-label="Edge"><svg viewBox="0 0 24 24"><path d="M2 12C3 5 7 2 12 2c6 0 10 4 10 11H9c0 5 6 7 11 4v4C12 25 4 21 5 14c0-3 2-5 4-6-3 0-5 2-7 4zm7-2h7c0-4-7-4-7 0z" fill="#0a7bdc"/></svg></button>
<button aria-label="应用商店"><svg viewBox="0 0 24 24"><path d="M.5 6h23v17H.5z" fill="#fff"/><path d="M8 6V4c0-4 8-4 8 0v2" fill="none" stroke="#fff"/><path d="M6.500 9h5v5h-5z" fill="#f25022"/><path d="M12.500 9h5v5h-5z" fill="#7fba00"/><path d="M6.500 15h5v5h-5z" fill="#00a4ef"/><path d="M12.500 15h5v5h-5z" fill="#ffb900"/></svg></button>
<button aria-label="文件资源管理器"><svg viewBox="0 0 24 24"><path d="M1 3h8l2 2h12v17H1z" fill="#ffe08a"/><path d="M1 3h8l1 2H1z" fill="#e5b84a"/><path d="M5 22v-9h14v9h-4v-5H9v5z" fill="#39a9e5"/></svg></button>
<button aria-label="Internet Explorer"><svg viewBox="0 0 24 24"><path d="M13 3c7 0 10 5 10 11H9c1 5 7 5 9 2h5c-2 5-6 7-10 7C0 22 1 3 13 3zM9 11h8c-1-5-8-4-8 0z" fill="#4bb2ec"/><path d="M3 23C-2 17 17-2 23 2c1 1 0 4-1 5 0-6-11-2-15 5-3 4-4 8-1 10z" fill="#f2c42d"/></svg></button>
<button class="run" aria-label="360浏览器"><svg viewBox="0 0 24 24"><circle cx="12" cy="12.500" r="10.500" fill="#5bc236"/><path d="M12 5c5 0 8 4 8 8H9c1 4 5 4 8 2-1 3-3 5-6 4-8-1-7-14 1-14zM9 11h7c-1-4-7-3-7 0z" fill="#fff"/><path d="M2 22C-1 18 16 0 22 2" fill="none" stroke="#d7f5c9"/></svg></button>
<button class="run on" aria-label="广联达BIM钢筋算量"><svg viewBox="0 0 16 16"><use href="#app"/></svg></button>
<button class="run" aria-label="G+"><svg viewBox="0 0 24 24"><path d="M24 2c-1 4-4 6-8 6-9-1-10 10-3 10 3 0 4-3 2-5h7c3 12-14 14-19 7C-2 12 2 2 12 1c5 1 8 3 12 1z" fill="#1e98ea"/><path d="M4 16C1 8 8 3 15 4" fill="none" stroke="#5cc6fa"/></svg></button>
</div>
<div class="tray">
<div class="cpu">29%<br>CPU使用</div>
<svg class="i" viewBox="0 0 16 16"><path d="m2 11 6-6 6 6" fill="none" stroke="#fff" stroke-width="1.300"/></svg>
<div class="trayicons">
<svg class="i" viewBox="0 0 16 16"><path d="M4.500 5.500h10v6h-10zM15 7.500v2M2.500 6v5h2M1 3v2M4 3v2M.5 5.500h4v2h-4z" fill="none" stroke="#fff"/><path d="M6 7h7v3H6z" fill="#fff"/></svg>
<svg class="i" viewBox="0 0 16 16"><g fill="none" stroke="#ddd"><path d="M3 14C3 8 8 3 15 3M6 14c0-4 4-8 9-8M9 14c0-3 2-5 6-5M12 14c0-2 1-3 3-3"/></g><circle cx="14" cy="14" r="1.500" fill="#fff"/></svg>
<svg class="i" viewBox="0 0 16 16"><path d="M.5 6h2L6 2.500v11L2.500 10h-2zM8 6c1 1 1 3 0 4m2-6c2 2 2 6 0 8m2-10c3 3 3 9 0 12" fill="none" stroke="#fff"/></svg>
<svg class="kb" viewBox="0 0 24 16"><path d="M.5 2.500h22v11H.5z" fill="none" stroke="#fff"/><path d="M3 5.500h18M3 8h18" stroke="#fff" stroke-dasharray="1 1"/><path d="M3 11h2m2 0h10m2 0h2" stroke="#fff"/></svg>
<b class="zh">中</b>
<svg class="i" viewBox="0 0 28 28"><use href="#sogou"/></svg>
</div>
<div class="clock">11:27<br>2017/11/14</div>
<button class="note" aria-label="通知"><svg viewBox="0 0 24 24"><path d="M0 2h16v12H8l-3 3v-3H0z" fill="#fff"/><path d="M3 5h10M3 8h10M3 11h7" stroke="#000"/></svg><span>20</span></button>
<i class="edge"></i>
</div>
</div>

<div class="ball">70</div>
<div class="ime"><svg class="logo"><use href="#sogou"/></svg><b>中</b>
<svg class="i" viewBox="0 0 16 16"><circle cx="4" cy="5" r="1.800" fill="none" stroke="#1b78cc"/><path d="M10 8c3 0 3 3 0 5" stroke="#1b78cc" stroke-width="2" fill="none"/></svg>
<svg class="i" viewBox="0 0 16 16"><rect x="5" y="0" width="6" height="10" rx="3" fill="#1b78cc"/><path d="M2.500 7c0 6 11 6 11 0M8 12v3m-3 0h6" stroke="#1b78cc" stroke-width="1.500" fill="none"/></svg>
<svg class="i" viewBox="0 0 16 16"><rect x="1" y="3" width="14" height="10" rx="1" fill="none" stroke="#1b78cc" stroke-width="1.500"/><path d="M3 6h10M3 8.500h10" stroke="#1b78cc" stroke-dasharray="1.500 1"/><path d="M4 11h8" stroke="#1b78cc"/></svg>
<svg class="i" viewBox="0 0 16 16"><circle cx="7" cy="4" r="3" fill="#b3bfd4"/><path d="M1 14c0-7 11-7 12-3v3z" fill="#b3bfd4"/><path d="M8 9h8v6H8z" fill="#8fa0bd"/></svg>
<svg class="i" viewBox="0 0 16 16"><path d="m1 4 4-2.500c2 2 4 2 6 0L15 4l-2 4-1-.5V15H4V7.500L3 8z" fill="#1b78cc"/></svg>
<svg class="i" viewBox="0 0 16 16"><path d="M2 14 9 7" stroke="#1b78cc" stroke-width="3"/><path d="M14 1c-6-1-8 4-5 6s7 0 6-4l-3 2-2-1z" fill="#1b78cc"/></svg>
</div>
<svg class="oval" viewBox="0 0 424 148"><ellipse cx="212" cy="74" rx="208" ry="70" fill="none" stroke="#f00" stroke-width="7"/></svg>

<div class="dialog" role="dialog" aria-labelledby="dlg">
<div class="dlg-head"><h2 id="dlg">其它箍筋类型设置</h2><button aria-label="关闭"><svg class="i" viewBox="0 0 16 16"><path d="m3 3 10 10M13 3 3 13" stroke="#000"/></svg></button></div>
<div class="dlg-body">
<table class="grid hoops">
<colgroup><col class="c-no"><col class="c-fig"><col class="c-info"><col class="c-shape"></colgroup>
<thead><tr><th></th><th class="hot">箍筋图号</th><th>箍筋信息</th><th>图形</th></tr></thead>
<tbody>
<tr class="first"><th>1</th><td class="mid">195</td><td><svg class="r"><use href="#rebar"/></svg>8@200</td><td class="shape"><span>120</span><span class="hoop"><svg><use href="#hoop"/></svg><em>470</em></span></td></tr>
<tr><th>2</th><td class="mid">195</td><td><svg class="r"><use href="#rebar"/></svg>8@200</td><td class="shape"><span>470</span><span class="hoop"><svg><use href="#hoop"/></svg><em>120</em></span></td></tr>
</tbody>
</table>
</div>
<div class="dlg-foot"><button>新建</button><button>删除</button><button>复制</button><button class="ok">确定</button><button>取消</button></div>
</div>
</body>
</html>
```

FILE: styles.css
```css
* { box-sizing: border-box; }
html, body { height: 100%; }
body {
  margin: 0; display: flex; flex-direction: column; position: relative; overflow: hidden;
  background: #f0f0f0; color: #000;
  font: 12px/16px "Open Sans", "Noto Sans CJK SC", sans-serif;
}
button, input, select { font: inherit; color: inherit; margin: 0; padding: 0; border: 0; background: none; border-radius: 0; outline: 0; }
ul { list-style: none; margin: 0; padding: 0; }
svg { display: block; flex: none; }
.defs { position: absolute; width: 0; height: 0; }
.i { width: 16px; height: 16px; }
.c { width: 12px; height: 12px; }

.title { display: flex; align-items: center; gap: 5px; height: 23px; padding-left: 2px; background: #fff; color: #999; flex: none; }
.title-text { flex: 1; white-space: nowrap; font-size: 13px; }
.winbtns { display: flex; }
.winbtns button { width: 46px; display: flex; justify-content: center; }

.menu { display: flex; align-items: center; height: 31px; flex: none; padding-left: 7px; white-space: nowrap; }
.menus { display: flex; justify-content: space-between; width: 772px; margin-right: 8px; }
.menu-extra { display: flex; gap: 5px; width: 150px; }
.tip { width: 188px; height: 29px; padding-left: 29px; line-height: 29px; background: #f8f8f8; color: #336600; text-decoration: none; }
.account { display: flex; align-items: center; gap: 8px; flex: 1; padding-left: 5px; height: 29px; background: #f4f4f4; }

.t { display: inline-flex; align-items: center; gap: 4px; white-space: nowrap; flex: none; }
.off { color: #7d7d7d; }
.caret { width: 7px; height: 4px; margin: 0 2px 0 1px; background: currentColor; clip-path: polygon(0 0, 100% 0, 50% 100%); flex: none; }
.tight .caret { margin: 0 0 0 -2px; }
.sep { width: 1px; height: 20px; background: #b5b5b5; flex: none; }
.more { margin-left: auto; padding: 0 3px; font-size: 16px; font-weight: bold; line-height: 16px; align-self: flex-start; flex: none; }

.bars { display: flex; gap: 3px; height: 30px; flex: none; }
.bar { display: flex; align-items: center; gap: 7px; height: 28px; padding-left: 4px; border-radius: 3px; background: linear-gradient(#fcfcfc, #efefef); }
.b1 { width: 150px; gap: 6px; flex: none; }
.b2 { width: 547px; flex: none; }
.b3 { flex: 1; min-width: 0; padding-left: 2px; gap: 6px; }
.sigma { width: 16px; font: bold 15px/16px "Liberation Serif", serif; text-align: center; }
.view { width: 61px; height: 23px; border: 1px solid #777; padding-left: 3px; gap: 4px; }
.swatch { width: 14px; height: 10px; border: 1px solid #c4c4c4; background: #e8e8e8; flex: none; }
.floor { display: flex; align-items: center; width: 58px; height: 24px; background: #fff; margin-left: -1px; }
.floor select { appearance: none; flex: 1; min-width: 0; padding-left: 1px; }
.b4 { gap: 6px; flex: none; }
.b4 label { margin-right: 1px; }

.work { flex: 1; min-height: 0; display: flex; gap: 6px; }
.nav, .parts, .props, .status, .dialog, .search { font-family: "Liberation Serif", "Noto Sans CJK SC", serif; }
.nav { width: 175px; display: flex; flex-direction: column; gap: 1px; flex: none; padding-bottom: 2px; }
.nav-head { display: flex; align-items: center; gap: 2px; height: 15px; border: 1px solid #8b8b8b; font-size: 13px; margin-bottom: 1px; }
.nav-head span { flex: 1; }
.nav-btn { height: 21px; margin-left: 1px; border: 1px solid #a0a0a0; border-top-color: #fff; box-shadow: 0 -1px #a0a0a0; background: #f0f0f0; flex: none; }
.nav-tools { display: flex; gap: 7px; height: 26px; padding: 6px 7px; background: linear-gradient(#fdfdfd, #ededed); flex: none; }
.tree-box { flex: 1; min-height: 0; display: flex; margin-left: 2px; border: 1px solid #828790; background: #fff; padding: 1px 2px 1px 0; overflow: hidden; }
.tree { flex: 1; overflow: hidden; white-space: nowrap; }
.tree li {
  display: flex; align-items: center; gap: 4px; height: 16px; padding-left: 42px;
  background:
    repeating-linear-gradient(#888 0 1px, transparent 1px 2px) 12px 0 / 1px 16px no-repeat,
    repeating-linear-gradient(#888 0 1px, transparent 1px 2px) 31px 0 / 1px 16px no-repeat,
    repeating-linear-gradient(90deg, #888 0 1px, transparent 1px 2px) 31px 8px / 11px 1px no-repeat;
}
.tree li.last { background-size: 1px 16px, 1px 8px, 11px 1px; }
.tree li.dir { padding-left: 6px; gap: 5px; background: repeating-linear-gradient(90deg, #888 0 1px, transparent 1px 2px) 20px 8px / 3px 1px no-repeat; }
.cur { display: flex; gap: 4px; background: #d9d9d9; margin-left: -2px; padding: 0 5px 0 2px; }
.scroll { width: 16px; display: flex; flex-direction: column; align-items: center; background: #f0f0f0; padding: 3px 0; }
.track { flex: 1; width: 100%; display: grid; grid-template-rows: 36fr 346fr 73fr; }
.track i { grid-row: 2; background: #cdcdcd; }

.main { flex: 1; min-width: 0; display: flex; flex-direction: column; }
.split { flex: 1; min-height: 0; display: flex; gap: 4px; }
.list { width: 183px; display: flex; flex-direction: column; gap: 1px; flex: none; padding: 5px 0 2px; }
.search { display: flex; height: 24px; }
.search input { flex: 1; min-width: 0; border: 1px solid #707070; background: #fff; padding: 0 2px 3px; }
.search input::placeholder { color: #777; opacity: 1; }
.search button { width: 25px; display: flex; align-items: center; justify-content: center; background: #fff; }
.parts { flex: 1; border: 1px solid #828790; background: #fff; padding-top: 1px; }
.parts li {
  display: flex; height: 16px; padding-left: 40px; white-space: nowrap;
  background:
    repeating-linear-gradient(#888 0 1px, transparent 1px 2px) 31px 0 / 1px 16px no-repeat,
    repeating-linear-gradient(90deg, #888 0 1px, transparent 1px 2px) 31px 8px / 10px 1px no-repeat;
}
.parts li.last { background-size: 1px 8px, 10px 1px; }
.parts li.root { align-items: center; gap: 4px; padding-left: 6px; background: none; }
.root .i { margin-left: 2px; }
.parts span { display: flex; gap: 6px; padding: 0 4px 0 1px; }
.parts span.sel { background: #316ac5; }

.props { flex: 1; min-width: 0; display: flex; flex-direction: column; }
.tabs { height: 21px; display: flex; background: #fff; flex: none; }
.tab { width: 64px; height: 21px; background: #fff; border: 1px solid #dcdcdc; border-bottom: 0; line-height: 18px; }
.pane { flex: 1; min-height: 0; display: flex; padding: 3px 5px 3px 4px; background: #fff; border: 1px solid #dcdcdc; border-right: 0; }
.sheet { flex: 1; border: 1px solid #a0a0a0; padding-top: 1px; }

.grid { border-spacing: 0; table-layout: fixed; width: 369px; }
.c-no { width: 21px; } .c-name { width: 191px; } .c-val { width: 126px; } .c-add { width: 31px; }
.grid th, .grid td { height: 19px; padding: 0; border: solid #c0c0c0; border-width: 0 1px 1px 0; font-weight: normal; line-height: 16px; white-space: nowrap; overflow: hidden; text-align: left; vertical-align: middle; }
.grid th { text-align: center; background: linear-gradient(#fff, #ececec); }
.grid thead th { height: 22px; }
.grid td { padding-left: 2px; background: #fff; }
.grid .hot { background: linear-gradient(#fad9a0, #f2bd5e); color: #660066; }
.grid td.n { padding-left: 20px; }
.blue { color: #0000ff; }
.dim td { color: #808080; }
.active th, .first th { background: #ffd48c !important; color: #660066; }
.active td:nth-child(2) { background: #0078d7; color: #fff; }
.active td:nth-child(3), .first td:nth-child(2) { background: #d9eaf9; }
.grid input { appearance: none; display: block; width: 13px; height: 13px; margin: 0 auto; border: 1px solid #222; background: #fff; }
.pm { width: 13px; height: 13px; border: 1px solid #b5b5b5; color: #000; font: 15px/10px "Liberation Sans", sans-serif; margin-right: 5px; vertical-align: -2px; }
.grid td.s {
  padding-left: 30px;
  background: linear-gradient(#b5b5b5, #b5b5b5) 9px 0 / 1px 100% no-repeat, linear-gradient(#b5b5b5, #b5b5b5) 9px 9px / 16px 1px no-repeat, #fff;
}
.grid td.s.end { background-size: 1px 10px, 16px 1px, auto; }
.r { display: inline-block; width: 12px; height: 12px; margin: 0 1px; vertical-align: -2px; }

.status { display: grid; grid-template-columns: 148px 78px 98px 48px 1fr 70px; gap: 2px; height: 22px; padding-top: 1px; background: #fff; flex: none; white-space: nowrap; }
.status span { border: 1px solid #d5d5d5; background: linear-gradient(#fff, #f0f0f0); padding-left: 1px; line-height: 20px; overflow: hidden; }

.task { display: flex; height: 40px; background: #000c10; color: #fff; flex: none; }
.start { width: 48px; background: #000; display: flex; align-items: center; justify-content: center; }
.cortana { display: flex; align-items: center; width: 344px; background: #333; padding: 0 13px 0 8px; gap: 4px; font-size: 14px; }
.cortana svg:first-child { width: 24px; height: 24px; }
.cortana input { flex: 1; min-width: 0; }
.cortana input::placeholder { color: #929292; opacity: 1; }
.apps { display: flex; gap: 2px; }
.apps button { width: 48px; display: flex; align-items: center; justify-content: center; border-bottom: 2px solid transparent; }
.apps svg { width: 24px; height: 24px; overflow: visible; }
.apps .run { border-bottom-color: #76b9ed; }
.apps .on { background: #343e42; }
.tray { margin-left: auto; display: flex; align-items: center; line-height: 17px; text-align: center; }
.cpu { width: 64px; margin-right: 10px; }
.trayicons { display: flex; align-items: center; gap: 8px; margin-left: 36px; width: 157px; }
.trayicons .i:first-child { margin-right: 1px; }
.kb { width: 24px; height: 16px; }
.zh { font-size: 14px; font-weight: normal; }
.clock { width: 72px; line-height: 18px; }
.note { position: relative; width: 50px; height: 40px; background: #000; padding-left: 14px; }
.note svg { width: 24px; height: 24px; }
.note span { position: absolute; left: 19px; top: 19px; width: 22px; height: 16px; border: 1px solid #999; border-radius: 8px; background: #333; font-weight: bold; line-height: 14px; }
.edge { width: 5px; height: 40px; border-left: 1px solid #666; background: #000; }

.ball { position: absolute; left: 492px; top: -28px; width: 46px; height: 46px; border-radius: 23px; background: #43c263; border: 1px solid #3a9e52; box-shadow: 0 2px 5px rgba(0, 0, 0, .5); color: #fff; font-weight: bold; text-align: center; line-height: 16px; padding-top: 26px; }
.ime { position: absolute; left: 985px; top: 3px; width: 171px; height: 24px; padding-left: 19px; display: flex; align-items: center; gap: 6px; background: #fff; border: 1px solid #b5c3d3; color: #1b78cc; }
.ime b { font-size: 15px; width: 15px; }
.logo { position: absolute; left: -14px; top: -4px; width: 28px; height: 28px; }
.oval { position: absolute; left: 328px; top: 255px; width: 424px; height: 148px; pointer-events: none; }

.dialog { position: absolute; left: 775px; top: 243px; width: 456px; background: #f0f0f0; border: 1px solid #3390e8; box-shadow: 0 3px 12px rgba(0, 0, 0, .35); }
.dlg-head { display: flex; align-items: center; justify-content: space-between; height: 25px; padding: 0 7px 0 3px; background: #fff; }
.dlg-head h2 { margin: 0; font: 12px/16px "Noto Sans CJK SC", sans-serif; }
.dlg-body { height: 281px; border: 1px solid #a0a0a0; background: #fff; padding: 1px; }
.hoops { width: 404px; }
.hoops thead th { height: 19px; }
.hoops tbody th, .hoops tbody td { height: 34px; }
.hoops td { padding-left: 3px; }
.hoops td.mid { text-align: center; padding: 0; }
.c-fig { width: 61px; } .c-info { width: 121px; } .c-shape { width: 201px; }
.shape span { display: inline-block; vertical-align: middle; }
.hoops td.shape { padding-left: 55px; }
.hoop { position: relative; margin-left: 8px; }
.hoop svg { width: 36px; height: 24px; }
.hoop em { position: absolute; left: 2px; top: 7px; font-style: normal; color: #f00; }
.dlg-foot { display: flex; align-items: center; gap: 7px; height: 42px; padding: 0 12px 0 5px; }
.dlg-foot button { width: 73px; height: 24px; background: #e1e1e1; border: 1px solid #adadad; }
.dlg-foot .ok { margin-left: auto; border: 2px solid #0078d7; }
```
